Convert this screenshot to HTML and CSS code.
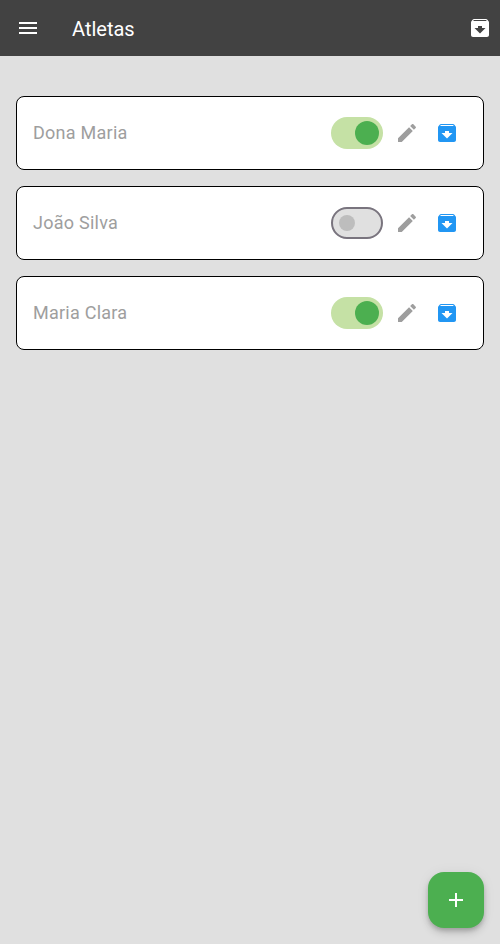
FILE: index.html
```html
<!DOCTYPE html>
<html lang="pt-BR">
<head>
<meta charset="utf-8">
<title>Atletas</title>
<link rel="stylesheet" href="styles.css">
</head>
<body>
<svg class="sprite" aria-hidden="true">
  <symbol id="archive" viewBox="0 0 24 24"><path d="M20.54 5.23l-1.39-1.68C18.88 3.21 18.47 3 18 3H6c-.47 0-.88.21-1.16.55L3.46 5.23C3.17 5.57 3 6.02 3 6.5V19c0 1.1.9 2 2 2h14c1.1 0 2-.9 2-2V6.5c0-.48-.17-.93-.46-1.27zM12 17.5L6.5 12H10v-2h4v2h3.5L12 17.5zM5.12 5l.81-1h12l.94 1H5.12z"/></symbol>
  <symbol id="edit" viewBox="0 0 24 24"><path d="M3 17.25V21h3.75L17.81 9.94l-3.75-3.75L3 17.25zM20.71 7.04c.39-.39.39-1.02 0-1.41l-2.34-2.34c-.39-.39-1.02-.39-1.41 0l-1.83 1.83 3.75 3.75 1.83-1.83z"/></symbol>
</svg>
<header class="appbar">
  <svg class="icon" viewBox="0 0 24 24"><path d="M3 18h18v-2H3v2zm0-5h18v-2H3v2zm0-7v2h18V6H3z"/></svg>
  <h1 class="title">Atletas</h1>
  <svg class="icon"><use href="#archive"/></svg>
</header>
<main class="list">
  <div class="card"><span class="name">Dona Maria</span><span class="switch on"><i class="thumb"></i></span><svg class="icon edit"><use href="#edit"/></svg><svg class="icon archive"><use href="#archive"/></svg></div>
  <div class="card"><span class="name">João Silva</span><span class="switch"><i class="thumb"></i></span><svg class="icon edit"><use href="#edit"/></svg><svg class="icon archive"><use href="#archive"/></svg></div>
  <div class="card"><span class="name">Maria Clara</span><span class="switch on"><i class="thumb"></i></span><svg class="icon edit"><use href="#edit"/></svg><svg class="icon archive"><use href="#archive"/></svg></div>
</main>
<button class="fab" aria-label="Adicionar"><svg class="icon" viewBox="0 0 24 24"><path d="M19 13h-6v6h-2v-6H5v-2h6V5h2v6h6v2z"/></svg></button>
</body>
</html>
```
FILE: styles.css
```css
* { box-sizing: border-box; }
body { margin: 0; min-height: 100vh; background: #e0e0e0; font-family: Roboto, sans-serif; }
.sprite { display: none; }
.icon { width: 24px; height: 24px; fill: currentColor; flex: none; display: block; }
.appbar { height: 56px; padding: 0 8px 0 16px; display: flex; align-items: center; background: #424242; color: #fff; }
.title { margin: 0 auto 0 32px; font-size: 20px; font-weight: 400; line-height: 28px; padding-top: 2px; }
.list { padding: 40px 16px; display: grid; gap: 16px; }
.card { height: 74px; padding: 0 24px 0 16px; display: flex; align-items: center; background: #fff; border: 1px solid #000; border-radius: 8px; }
.name { margin-right: auto; font-size: 18px; letter-spacing: 0.25px; line-height: 24px; color: #9e9e9e; }
.switch { width: 52px; height: 32px; border: 2px solid #79747e; border-radius: 16px; background: #e0e0e0; display: flex; align-items: center; padding: 0 6px; }
.thumb { width: 16px; height: 16px; border-radius: 50%; background: #bdbdbd; }
.switch.on { border: 0; background: #c5e1a5; justify-content: flex-end; padding: 0 4px; }
.switch.on .thumb { width: 24px; height: 24px; background: #4caf50; }
.edit { margin-left: 12px; color: #9e9e9e; }
.archive { margin-left: 16px; color: #2196f3; }
.fab { position: fixed; right: 16px; bottom: 16px; width: 56px; height: 56px; border: 0; border-radius: 16px; padding: 16px; background: #4caf50; color: #fff; box-shadow: 0 3px 5px -1px rgba(0,0,0,.2), 0 5px 9px rgba(0,0,0,.14), 0 1px 14px rgba(0,0,0,.06); }
```
